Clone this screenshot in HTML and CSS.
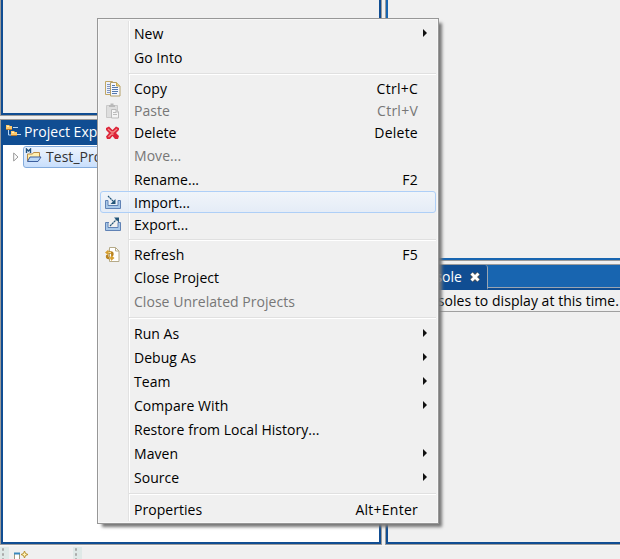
FILE: index.html
```html
<!DOCTYPE html>
<html lang="en">
<head>
<meta charset="utf-8">
<title>Project Explorer</title>
<link rel="stylesheet" href="styles.css">
</head>
<body>
<div class="workbench">
  <div class="column left">
    <section class="panel editor"></section>
    <section class="panel explorer">
      <header class="title">
        <svg class="tree-icon" width="16" height="13" viewBox="0 0 16 13"><path d="M3.500 5v5H7M8 2.500h5M12 9.500h4" fill="none" stroke="#b8d8f5"/><path d="M1 0h3l1 1h2v4H1zM6 6h3l1 1h2v4H6z" fill="#ffc96b"/><path d="M1 4.500h6M6 10.500h6" stroke="#b57931"/><path d="M2 1.500h2M7 7.500h2" stroke="#fff0bd"/></svg>
        <span>Project Explorer</span>
      </header>
      <div class="tree">
        <svg class="twisty" width="6" height="10" viewBox="0 0 6 10"><path d="M.7 1v8L5 5z" fill="#fff" stroke="#999"/></svg>
        <div class="project">
          <svg width="17" height="16" viewBox="0 0 17 16"><path d="M2.500 13V6h5l1-1.500h6V9" fill="#fff0b0" stroke="#b98b45"/><path d="M2.500 13.500 5 9h11l-3 4.500z" fill="#b8d6f5" stroke="#3d5f9f"/><path d="M1.500 5V1l2 2 2-2v4" fill="none" stroke="#235480" stroke-width="1.400"/></svg>
          <span>Test_Project</span>
        </div>
      </div>
    </section>
  </div>
  <div class="column right">
    <section class="panel outline"></section>
    <section class="panel console">
      <header class="tabs"><div class="tab"><span>Console</span>
        <svg width="12" height="12" viewBox="0 0 12 12"><path d="m2.500 2.500 7 7m0-7-7 7" stroke="#58534b" stroke-width="4.500"/><path d="m2.500 2.500 7 7m0-7-7 7" stroke="#fff" stroke-width="2.900"/></svg></div></header>
      <div class="message"><span>No consoles to display at this time.</span></div>
    </section>
  </div>
</div>
<footer class="status">
  <i class="grip"></i>
  <svg class="fastview" width="16" height="12" viewBox="0 0 16 12"><path d="M.5 3.500h5V12h-5z" fill="#fff" stroke="#a29b80"/><path d="M0 3.500h6" stroke="#3a88bd" stroke-width="2"/><path d="m10.500 1 1 2.500L14 4.500l-2.500 1-1 2.500-1-2.500-2.500-1 2.500-1z" fill="#fff3b6" stroke="#b8912f"/></svg>
  <i class="grip"></i>
</footer>
<nav class="menu">
  <div class="item tall"><span class="label">New</span><i class="arrow"></i></div>
  <div class="item tall"><span class="label">Go Into</span></div>
  <div class="separator"></div>
  <div class="item"><svg class="icon" viewBox="0 0 16 16"><path d="M.5.500h7l2 2v11h-9z" fill="#edf2fc" stroke="#c1a765"/><path d="M2 3.500h3M2 5.500h3M2 7.500h3M2 9.500h3M2 11.500h3" stroke="#8296bf"/><path d="M5.500 1.500h6l3.500 3.500v10H5.500z" fill="#f5f8ff" stroke="#b39f69"/><path d="M11.500 1.500v3.500H15" fill="#e5ce83" stroke="#c7a64f"/><path d="M7 4.500h3M7 6.500h6M7 8.500h6M7 10.500h6M7 12.500h5" stroke="#5479ae"/></svg><span class="label">Copy</span><span class="key">Ctrl+C</span></div>
  <div class="item disabled"><svg class="icon" viewBox="0 0 16 16"><path d="M1.500 2.500h11v12h-11z" fill="#dedede" stroke="#c9c9c9"/><path d="M4 3h6M5.500 1.500h3" stroke="#b9b9b9" stroke-width="2"/><path d="M6.500 6.500h4.500l2.500 2.500v6h-7z" fill="#f5f5f5" stroke="#bbb"/><path d="M8 9.500h3M8 11.500h4M11 6.500v2.500h2.500" fill="none" stroke="#bbb"/></svg><span class="label">Paste</span><span class="key">Ctrl+V</span></div>
  <div class="item"><svg class="icon" viewBox="0 0 16 16"><path d="m1 3 3-1.500L7.500 5 11 1.500 14 3v2l-3 3 3 3-1 3h-3L7.500 11 5 14H2l-1-2.500L4 8 1 5z" fill="#dc2539"/><path d="m3 4 3.500 3h2L12 4M3.500 12l3-3h2" fill="none" stroke="#f38b87" stroke-width="1.300"/></svg><span class="label">Delete</span><span class="key">Delete</span></div>
  <div class="item tall disabled"><span class="label">Move...</span></div>
  <div class="item tall"><span class="label">Rename...</span><span class="key">F2</span></div>
  <div class="item selected"><svg class="icon" viewBox="0 0 16 16"><path d="M3 5.500H.5v8h15v-8H13v5H3z" fill="#a9c9e9" stroke="#6082b5"/><path d="m3 1 6 6" stroke="#235578" stroke-width="1.200" stroke-dasharray="2.200 .5"/><path d="M10.500 4v5h-5z" fill="#235578"/></svg><span class="label">Import...</span></div>
  <div class="item"><svg class="icon" viewBox="0 0 16 16"><path d="M4 5.500H.5v8h15v-8H13v5H3v-5" fill="#a9c9e9" stroke="#6082b5"/><path d="m5 9 7-7" stroke="#235578" stroke-width="1.200" stroke-dasharray="2.200 .5"/><path d="M9 .5h5v5z" fill="#235578"/></svg><span class="label">Export...</span></div>
  <div class="separator"></div>
  <div class="item"><svg class="icon" viewBox="0 0 16 16"><path d="M4.500.500h6L14 4v10.500H4.500z" fill="#fff" stroke="#b5aa89"/><path d="M10.500.500V4H14" fill="none" stroke="#b5aa89"/><path d="M2 5.500h4c2 0 2 3 0 3M7 11H3.500c-2 0-2-2.500 0-2.500" fill="none" stroke="#b98320" stroke-width="2.300"/><path d="M2.500 5.500H6M7 11H4" stroke="#ffe482"/><path d="m0 5.500 3.500-3v6zM9.500 11 6 8v6z" fill="#d7a033"/></svg><span class="label">Refresh</span><span class="key">F5</span></div>
  <div class="item tall"><span class="label">Close Project</span></div>
  <div class="item tall disabled"><span class="label">Close Unrelated Projects</span></div>
  <div class="separator"></div>
  <div class="item tall"><span class="label">Run As</span><i class="arrow"></i></div>
  <div class="item tall"><span class="label">Debug As</span><i class="arrow"></i></div>
  <div class="item tall"><span class="label">Team</span><i class="arrow"></i></div>
  <div class="item tall"><span class="label">Compare With</span><i class="arrow"></i></div>
  <div class="item tall"><span class="label">Restore from Local History...</span></div>
  <div class="item tall"><span class="label">Maven</span><i class="arrow"></i></div>
  <div class="item tall"><span class="label">Source</span><i class="arrow"></i></div>
  <div class="separator"></div>
  <div class="item tall"><span class="label">Properties</span><span class="key">Alt+Enter</span></div>
</nav>
</body>
</html>
```
FILE: styles.css
```css
* { box-sizing: border-box; }
body {
  margin: 0;
  height: 559px;
  overflow: hidden;
  background: #f0f0f0;
  color: #000;
  font: 14px/20px "Open Sans", "Noto Sans", sans-serif;
  letter-spacing: 0.04px;
  white-space: nowrap;
}
svg { display: block; flex: none; }
.workbench { display: grid; grid-template-columns: 382px 1fr; column-gap: 3px; height: 545px; }
.column { display: grid; gap: 3px; min-width: 0; }
.left { grid-template-rows: 116px 1fr; }
.right { grid-template-rows: 261px 1fr; }
.panel { border: 1px solid #9b9b9b; box-shadow: inset 0 0 0 2px #104d92; padding: 2px; min-width: 0; overflow: hidden; background: #f0f0f0; }
.editor, .outline { border-top: 0; }
.editor { box-shadow: inset 2px -2px #104d92, inset -2px 0 #104d92; }
.outline { border-right: 0; box-shadow: inset 2px -2px #1865b0; }
.explorer { padding: 0 2px 2px; background: #fff; }
.title { display: flex; align-items: center; height: 25px; margin: 0 -2px; padding: 0 0 2px 4px; background: #104d92; color: #fff; }
.title span { margin-left: 3px; }
.tree { display: flex; align-items: center; height: 24px; padding-left: 10px; color: #333; }
.twisty { margin-right: 4px; }
.project { display: flex; align-items: center; width: 130px; height: 22px; padding-left: 1px; border: 1px solid #84acdd; border-radius: 3px; background: linear-gradient(#edf4fd, #c9dffc); }
.project svg { margin-top: -2px; }
.project span { margin-left: 4px; }
.console { border-right: 0; padding: 0 0 2px; box-shadow: inset 2px -2px #104d92; }
.tabs { height: 25px; background: linear-gradient(#1865b0 22px, #9aa5b2 22px 23px, #104d92 23px); }
.tab { display: flex; align-items: center; justify-content: flex-end; gap: 7px; width: 102px; height: 25px; padding-right: 6px; border-right: 1px solid #9aa5b2; border-bottom: 2px solid #104d92; border-radius: 0 3px 0 0; background: #104d92; color: #fff; }
.message { display: flex; justify-content: flex-end; height: 22px; margin-left: 2px; padding: 1px 1px 0 0; border-bottom: 1px solid #a0a0a0; }
.status { display: flex; height: 14px; padding-top: 1px; border-top: 1px solid #f8f8f8; }
.grip { width: 9px; height: 12px; background: radial-gradient(circle, #aaa 1px, transparent 1.5px) 1px 0 / 4px 5px repeat-y, #dfe9e7; }
.fastview { margin: 3px 43px 0 5px; }
.menu {
  position: absolute;
  left: 97px;
  top: 18px;
  width: 342px;
  height: 506px;
  padding: 2px;
  border: 1px solid #979797;
  background: linear-gradient(90deg, #e2e2e2 1px, #fff 1px) 30px 2px / 2px 500px no-repeat, #f0f0f0;
  box-shadow: inset 0 0 0 1px #f7f7f7, 4px 4px 3px -1px #777;
}
.item { display: flex; align-items: center; height: 22px; padding-left: 4px; padding-top: 1px; border: 1px solid transparent; }
.item.tall { height: 24px; }
.icon { width: 16px; height: 16px; margin-right: 13px; }
.label { line-height: 20px; }
.item .label:first-child { margin-left: 29px; }
.key { margin-left: auto; padding-right: 17px; letter-spacing: 0.25px; }
.disabled { color: #777; }
.selected { border-color: #aecff7; border-radius: 3px; background: linear-gradient(rgba(240,246,253,.7), rgba(225,235,249,.75)); }
.arrow { margin: -2px 8px 0 auto; border: 4px solid transparent; border-right: 0; border-left-color: #111; }
.separator { height: 8px; margin-left: 29px; background: linear-gradient(#e0e0e0 1px, #fff 1px) 0 4px / 100% 2px no-repeat; }
```
